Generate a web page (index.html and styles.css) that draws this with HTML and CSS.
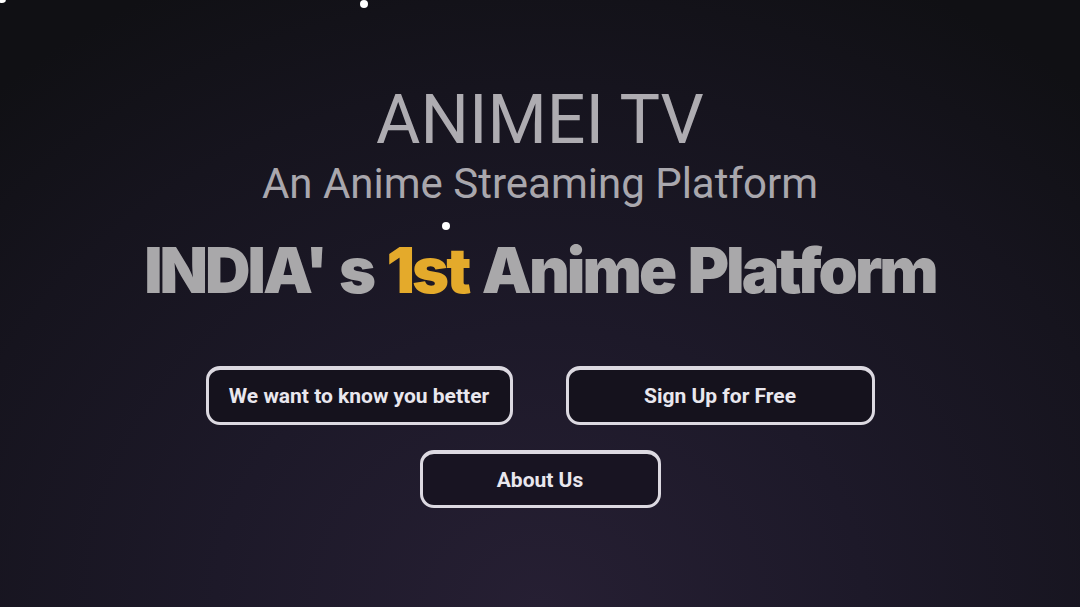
FILE: index.html
```html
<!DOCTYPE html>
<html lang="en">
<head>
<meta charset="utf-8">
<title>ANIMEI TV</title>
<link rel="stylesheet" href="styles.css">
</head>
<body>
<div class="page">
  <span class="particle p1"></span>
  <span class="particle p2"></span>
  <span class="particle p3"></span>
  <main class="hero">
    <h1 class="title">ANIMEI TV</h1>
    <p class="subtitle">An Anime Streaming Platform</p>
    <h2 class="headline">INDIA' s <span class="gold">1st</span> Anime Platform</h2>
    <div class="actions">
      <div class="row">
        <a class="btn btn-know" href="#">We want to know you better</a>
        <a class="btn btn-signup" href="#">Sign Up for Free</a>
      </div>
      <div class="row">
        <a class="btn btn-about" href="#">About Us</a>
      </div>
    </div>
  </main>
</div>
</body>
</html>
```
FILE: styles.css
```css
* { box-sizing: border-box; }
html, body { margin: 0; padding: 0; }
body {
  width: 1080px;
  height: 607px;
  overflow: hidden;
  font-family: Roboto, "Liberation Sans", sans-serif;
}
.page {
  position: relative;
  width: 1080px;
  height: 607px;
  background: radial-gradient(ellipse 75% 115% at 50% 100%, #261f33 0%, #1d1929 40%, #16141e 75%, #101014 100%);
}
.particle {
  position: absolute;
  width: 8px;
  height: 8px;
  border-radius: 50%;
  background: #fff;
}
.p1 { left: -2px; top: -5px; }
.p2 { left: 360px; top: 0px; }
.p3 { left: 442px; top: 222px; }
.hero {
  display: flex;
  flex-direction: column;
  align-items: center;
  padding-top: 80px;
}
.title {
  margin: 0;
  font-family: Roboto, sans-serif;
  font-weight: 400;
  font-size: 68px;
  line-height: 80px;
  color: #aeacb1;
}
.subtitle {
  margin: -1px 0 0;
  font-family: Roboto, sans-serif;
  font-weight: 400;
  font-size: 42px;
  line-height: 49px;
  color: #a9a7ad;
}
.headline {
  margin: 22px 0 0;
  font-family: Inter, Roboto, sans-serif;
  font-weight: 900;
  font-size: 63px;
  line-height: 80px;
  letter-spacing: -3px;
  word-spacing: 4px;
  color: #a9a8aa;
}
.gold { color: #e4aa2b; }
.actions {
  margin-top: 56px;
  display: flex;
  flex-direction: column;
  align-items: center;
  gap: 25px;
}
.row {
  display: flex;
  gap: 53px;
}
.btn {
  display: flex;
  align-items: center;
  justify-content: center;
  height: 59px;
  border: 3px solid #dcd9e1;
  border-top-width: 4px;
  border-radius: 14px;
  background: #15121d;
  color: #e9e7ee;
  font-family: Roboto, sans-serif;
  font-weight: 700;
  font-size: 21px;
  text-decoration: none;
}
.btn-know { width: 307px; }
.btn-signup { width: 309px; }
.btn-about { width: 241px; height: 58px; background: #181422; }
```
